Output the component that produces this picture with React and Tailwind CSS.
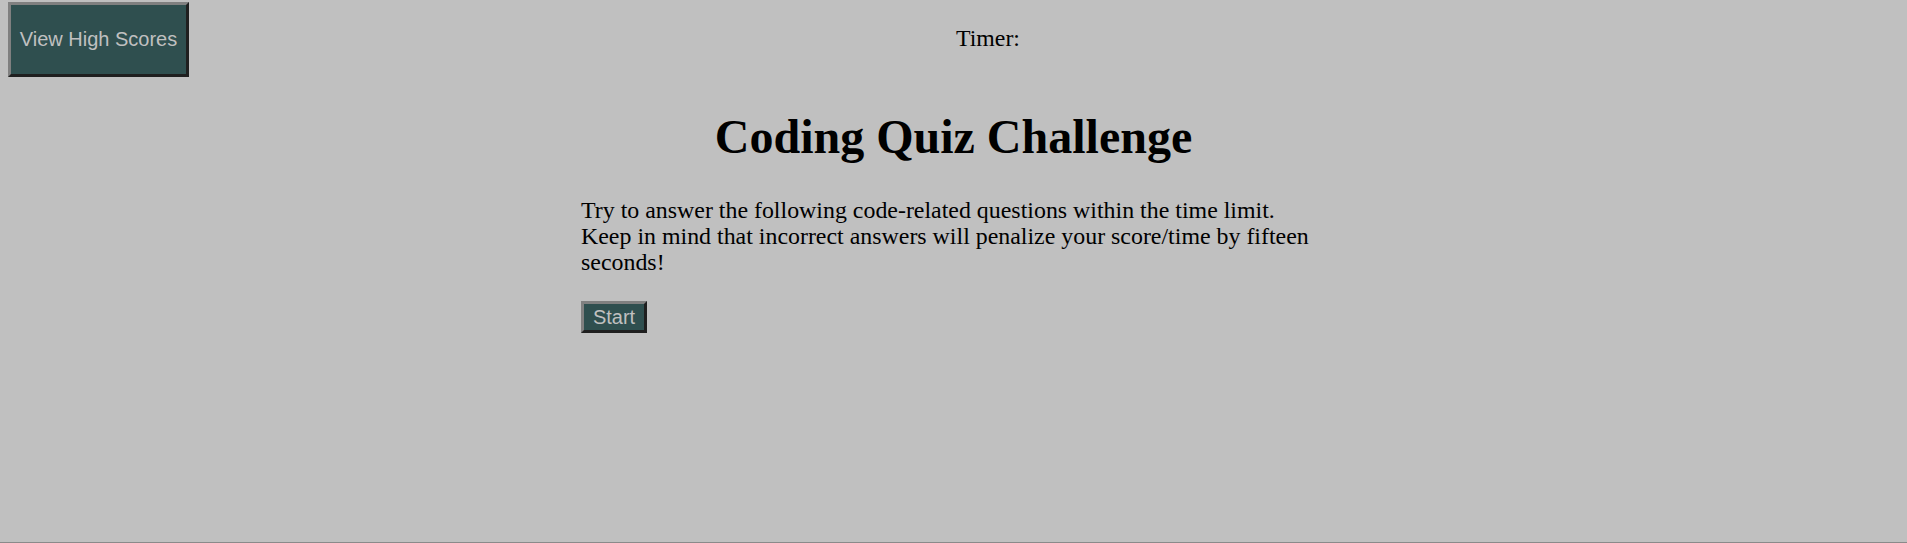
export default function App() {
  return (
    <div className="h-[543px] bg-[#c0c0c0] border-b border-[#8a8a8a] font-['Liberation_Serif',serif] text-black">
      {/* top bar: scores button and timer */}
      <header className="flex items-start">
        <button className="ml-[8px] mt-[2px] w-[181px] h-[75px] pb-[2px] bg-[#2f4f4f] text-[#c0c0c0] font-['Liberation_Sans',Arial,sans-serif] text-[20px] border-[3px] border-t-[#808080] border-l-[#808080] border-b-[#1f1f1f] border-r-[#1f1f1f]">
          View High Scores
        </button>
        <div className="ml-[767px] mt-[25px] text-[23.8px] leading-[26px]">
          Timer: <span id="time"></span>
        </div>
      </header>

      <main className="w-[745px] mx-auto">
        <h1 className="mt-[33px] text-center text-[48px] font-bold leading-[53px]">
          Coding Quiz Challenge
        </h1>
        <p className="mt-[34px] text-[23.9px] leading-[26px]">
          Try to answer the following code-related questions within the time
          limit. Keep in mind that incorrect answers will penalize your
          score/time by fifteen seconds!
        </p>
        <button className="mt-[26px] w-[66px] h-[32px] bg-[#2f4f4f] text-[#c0c0c0] font-['Liberation_Sans',Arial,sans-serif] text-[20px] leading-none border-[3px] border-t-[#808080] border-l-[#808080] border-b-[#1f1f1f] border-r-[#1f1f1f]">
          Start
        </button>
      </main>
    </div>
  );
}
